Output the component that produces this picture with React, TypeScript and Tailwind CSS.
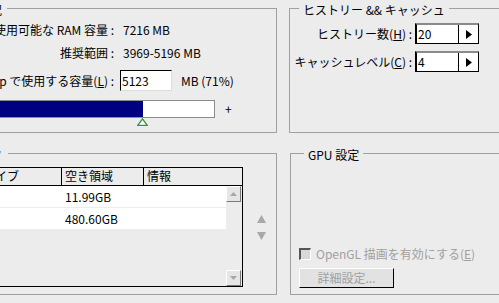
import React from "react";

const Spinner = ({ value }: { value: string }) => (
  <div className="ml-[3px] flex h-[21px] w-[64px] border border-black border-t-2 border-l-2 border-t-[#8a8a8a] bg-white">
    <div className="flex flex-1 items-center pl-[1px] leading-none">{value}</div>
    <div className="flex w-[20px] items-center justify-center border-l border-black">
      <svg width="6" height="9" viewBox="0 0 6 9">
        <path d="M0 0 L6 4.5 L0 9 Z" fill="#000" />
      </svg>
    </div>
  </div>
);

const ScrollBtn = ({ up }: { up: boolean }) => (
  <div className="flex h-[16px] w-[15px] items-center justify-center border border-t-white border-l-white border-r-[#7a7a7a] border-b-[#7a7a7a] bg-[#e6e6e6]">
    <svg width="7" height="4" viewBox="0 0 7 4">
      <path d={up ? "M0 4 L3.5 0 L7 4 Z" : "M0 0 L3.5 4 L7 0 Z"} fill="#a8a8a8" />
    </svg>
  </div>
);

export default function App() {
  return (
    <div className="h-[303px] w-[499px] overflow-hidden bg-[#ececec] font-['Noto_Sans_CJK_JP',sans-serif] text-[12px] text-black">
      <div className="flex pt-[8px]">
        {/* memory box */}
        <div className="relative ml-[-120px] h-[125px] w-[397px] shrink-0 border border-[#a0a0a0]">
          <span className="absolute top-[-6px] right-[269px] bg-[#ececec] pl-1 pr-[5px] leading-[14px]">メモリ使用状況</span>
          <div className="flex flex-col pt-[11px]">
            <div className="flex h-[20px] items-center">
              <div className="w-[233px] text-right">使用可能な RAM 容量 :</div>
              <div className="ml-[9px]">7216 MB</div>
            </div>
            <div className="mt-[3px] flex h-[20px] items-center">
              <div className="w-[233px] text-right">推奨範囲 :</div>
              <div className="ml-[9px]">3969-5196 MB</div>
            </div>
            <div className="mt-[7px] flex h-[21px] items-center">
              <div className="w-[233px] text-right">
                Photoshop で使用する容量(<span className="underline">L</span>) :
              </div>
              <div className="ml-[6px] flex h-[21px] w-[52px] items-center border border-t-black border-l-black border-r-[#dcdcdc] border-b-[#dcdcdc] bg-white pl-[1px]">
                5123
              </div>
              <div className="ml-[9px]">MB (71%)</div>
            </div>
            <div className="mt-[9px] flex items-center">
              <div className="ml-[19px] flex h-[18px] w-[315px] border border-[#8c8c8c] bg-white">
                <div className="h-full w-[242px] bg-[#000080]" />
              </div>
              <div className="ml-[10px] leading-none">+</div>
            </div>
            <div className="ml-[256px] flex">
              <svg width="11" height="8" viewBox="0 0 11 8">
                <path d="M5.5 0.8 L10.2 7.3 L0.8 7.3 Z" fill="#fff" stroke="#2e9a3e" strokeWidth="1.3" />
              </svg>
            </div>
          </div>
        </div>
        {/* history box */}
        <div className="relative ml-[12px] h-[125px] w-[240px] shrink-0 border border-[#a0a0a0]">
          <span className="absolute top-[-6px] left-[9px] bg-[#ececec] px-1 leading-[14px]">ヒストリー &amp;&amp; キャッシュ</span>
          <div className="flex flex-col pt-[14px]">
            <div className="flex h-[21px] items-center">
              <div className="w-[122px] text-right">
                ヒストリー数(<span className="underline">H</span>) :
              </div>
              <Spinner value="20" />
            </div>
            <div className="mt-[7px] flex h-[21px] items-center">
              <div className="w-[122px] text-right">
                キャッシュレベル(<span className="underline">C</span>) :
              </div>
              <Spinner value="4" />
            </div>
          </div>
        </div>
      </div>

      <div className="mt-[20px] flex">
        {/* scratch disks */}
        <div className="relative ml-[-120px] h-[142px] w-[397px] shrink-0 border border-[#a0a0a0]">
          <span className="absolute top-[-6px] right-[268px] bg-[#ececec] pl-1 pr-[6px] leading-[14px]">仮想記憶ディスク</span>
          <div className="flex">
            <div className="ml-[9px] mt-[13px] flex h-[120px] w-[353px] flex-col border border-black">
              <div className="flex h-[18px] shrink-0 border-b border-black bg-[#ececec] leading-[16px]">
                <div className="w-[76px] border-r border-black pl-[4px]">アクティブ</div>
                <div className="w-[95px] border-r border-black pl-[4px]">ドライブ</div>
                <div className="w-[82px] border-r border-black pl-[3px]">空き領域</div>
                <div className="flex-1 pl-[3px]">情報</div>
              </div>
              <div className="flex flex-1">
                <div className="flex flex-1 flex-col">
                  <div className="flex h-[22px] items-center border-b border-[#ececec] bg-white pl-[174px]">11.99GB</div>
                  <div className="flex h-[21px] items-center bg-white pl-[174px]">480.60GB</div>
                </div>
                <div className="flex w-[16px] flex-col justify-between border-r border-[#ececec]">
                  <ScrollBtn up />
                  <ScrollBtn up={false} />
                </div>
              </div>
            </div>
            <div className="ml-[14px] mt-[61px] flex flex-col gap-[9px]">
              <svg width="9" height="8" viewBox="0 0 9 8">
                <path d="M4.5 0 L9 8 L0 8 Z" fill="#a8a8a8" />
              </svg>
              <svg width="9" height="8" viewBox="0 0 9 8">
                <path d="M0 0 L9 0 L4.5 8 Z" fill="#a8a8a8" />
              </svg>
            </div>
          </div>
        </div>
        {/* GPU */}
        <div className="relative ml-[13px] h-[142px] w-[240px] shrink-0 border border-[#a0a0a0]">
          <span className="absolute top-[-6px] left-[13px] bg-[#ececec] px-1 leading-[14px]">GPU 設定</span>
          <div className="flex flex-col pl-[8px] pt-[94px]">
            <div className="flex h-[12px] items-center">
              <div className="h-[12px] w-[12px] border border-t-2 border-l-2 border-t-[#555] border-l-[#555] border-r-white border-b-white bg-[#d8d8d8]" />
              <div className="ml-[5px] text-[#a0a0a0]">
                OpenGL 描画を有効にする(<span className="underline">E</span>)
              </div>
            </div>
            <div className="mt-[8px] flex h-[20px] w-[95px] items-center justify-center border border-t-white border-l-white border-r-black border-b-black bg-[#e2e2e2] text-[#a0a0a0]">
              詳細設定...
            </div>
          </div>
        </div>
      </div>
    </div>
  );
}
